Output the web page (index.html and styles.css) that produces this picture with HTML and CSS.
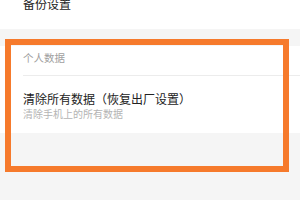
FILE: index.html
```html
<!DOCTYPE html>
<html lang="zh-CN">
<head>
  <meta charset="UTF-8">
  <meta name="viewport" content="width=device-width, initial-scale=1.0">
  <title>设置</title>
  <link rel="stylesheet" href="styles.css">
</head>
<body>
  <div class="page">
    <div class="row row-top">
      <span class="title">备份设置</span>
    </div>

    <div class="gap"></div>

    <div class="group">
      <div class="group-head">个人数据</div>
      <div class="divider"></div>
      <div class="row row-reset">
        <span class="title">清除所有数据（恢复出厂设置）</span>
        <span class="sub">清除手机上的所有数据</span>
      </div>
    </div>
  </div>

  <div class="highlight"></div>
</body>
</html>
```

FILE: styles.css
```css
body {
  margin: 0;
  padding: 0;
  background-color: #f5f5f5;
  font-family: "Noto Sans CJK SC", "Noto Sans", sans-serif;
  width: 300px;
  height: 200px;
  overflow: hidden;
  position: relative;
}

.page {
  display: flex;
  flex-direction: column;
}

.row {
  background-color: #fff;
  padding-left: 23px;
}

.row-top {
  height: 29px;
}

.row-top .title {
  display: block;
  margin-top: -4px;
  line-height: 16px;
}

.title {
  font-size: 12px;
  color: #222;
}

.gap {
  height: 17px;
}

.group {
  background-color: #fff;
  height: 87px;
}

.group-head {
  padding: 5px 0 0 23px;
  height: 23px;
  line-height: 13px;
  font-size: 10.5px;
  color: #a0a0a0;
  box-sizing: border-box;
}

.divider {
  margin: 6px 0 0 23px;
  height: 1px;
  background-color: #ececec;
}

.row-reset {
  display: flex;
  flex-direction: column;
  padding-top: 15px;
}

.row-reset .title {
  line-height: 16px;
  font-size: 12px;
}

.sub {
  font-size: 10px;
  line-height: 13px;
  color: #b4b4b4;
}

.highlight {
  position: absolute;
  left: 5px;
  top: 39px;
  width: 284px;
  height: 133px;
  border: 6px solid #f67a2c;
  box-sizing: border-box;
}
```
